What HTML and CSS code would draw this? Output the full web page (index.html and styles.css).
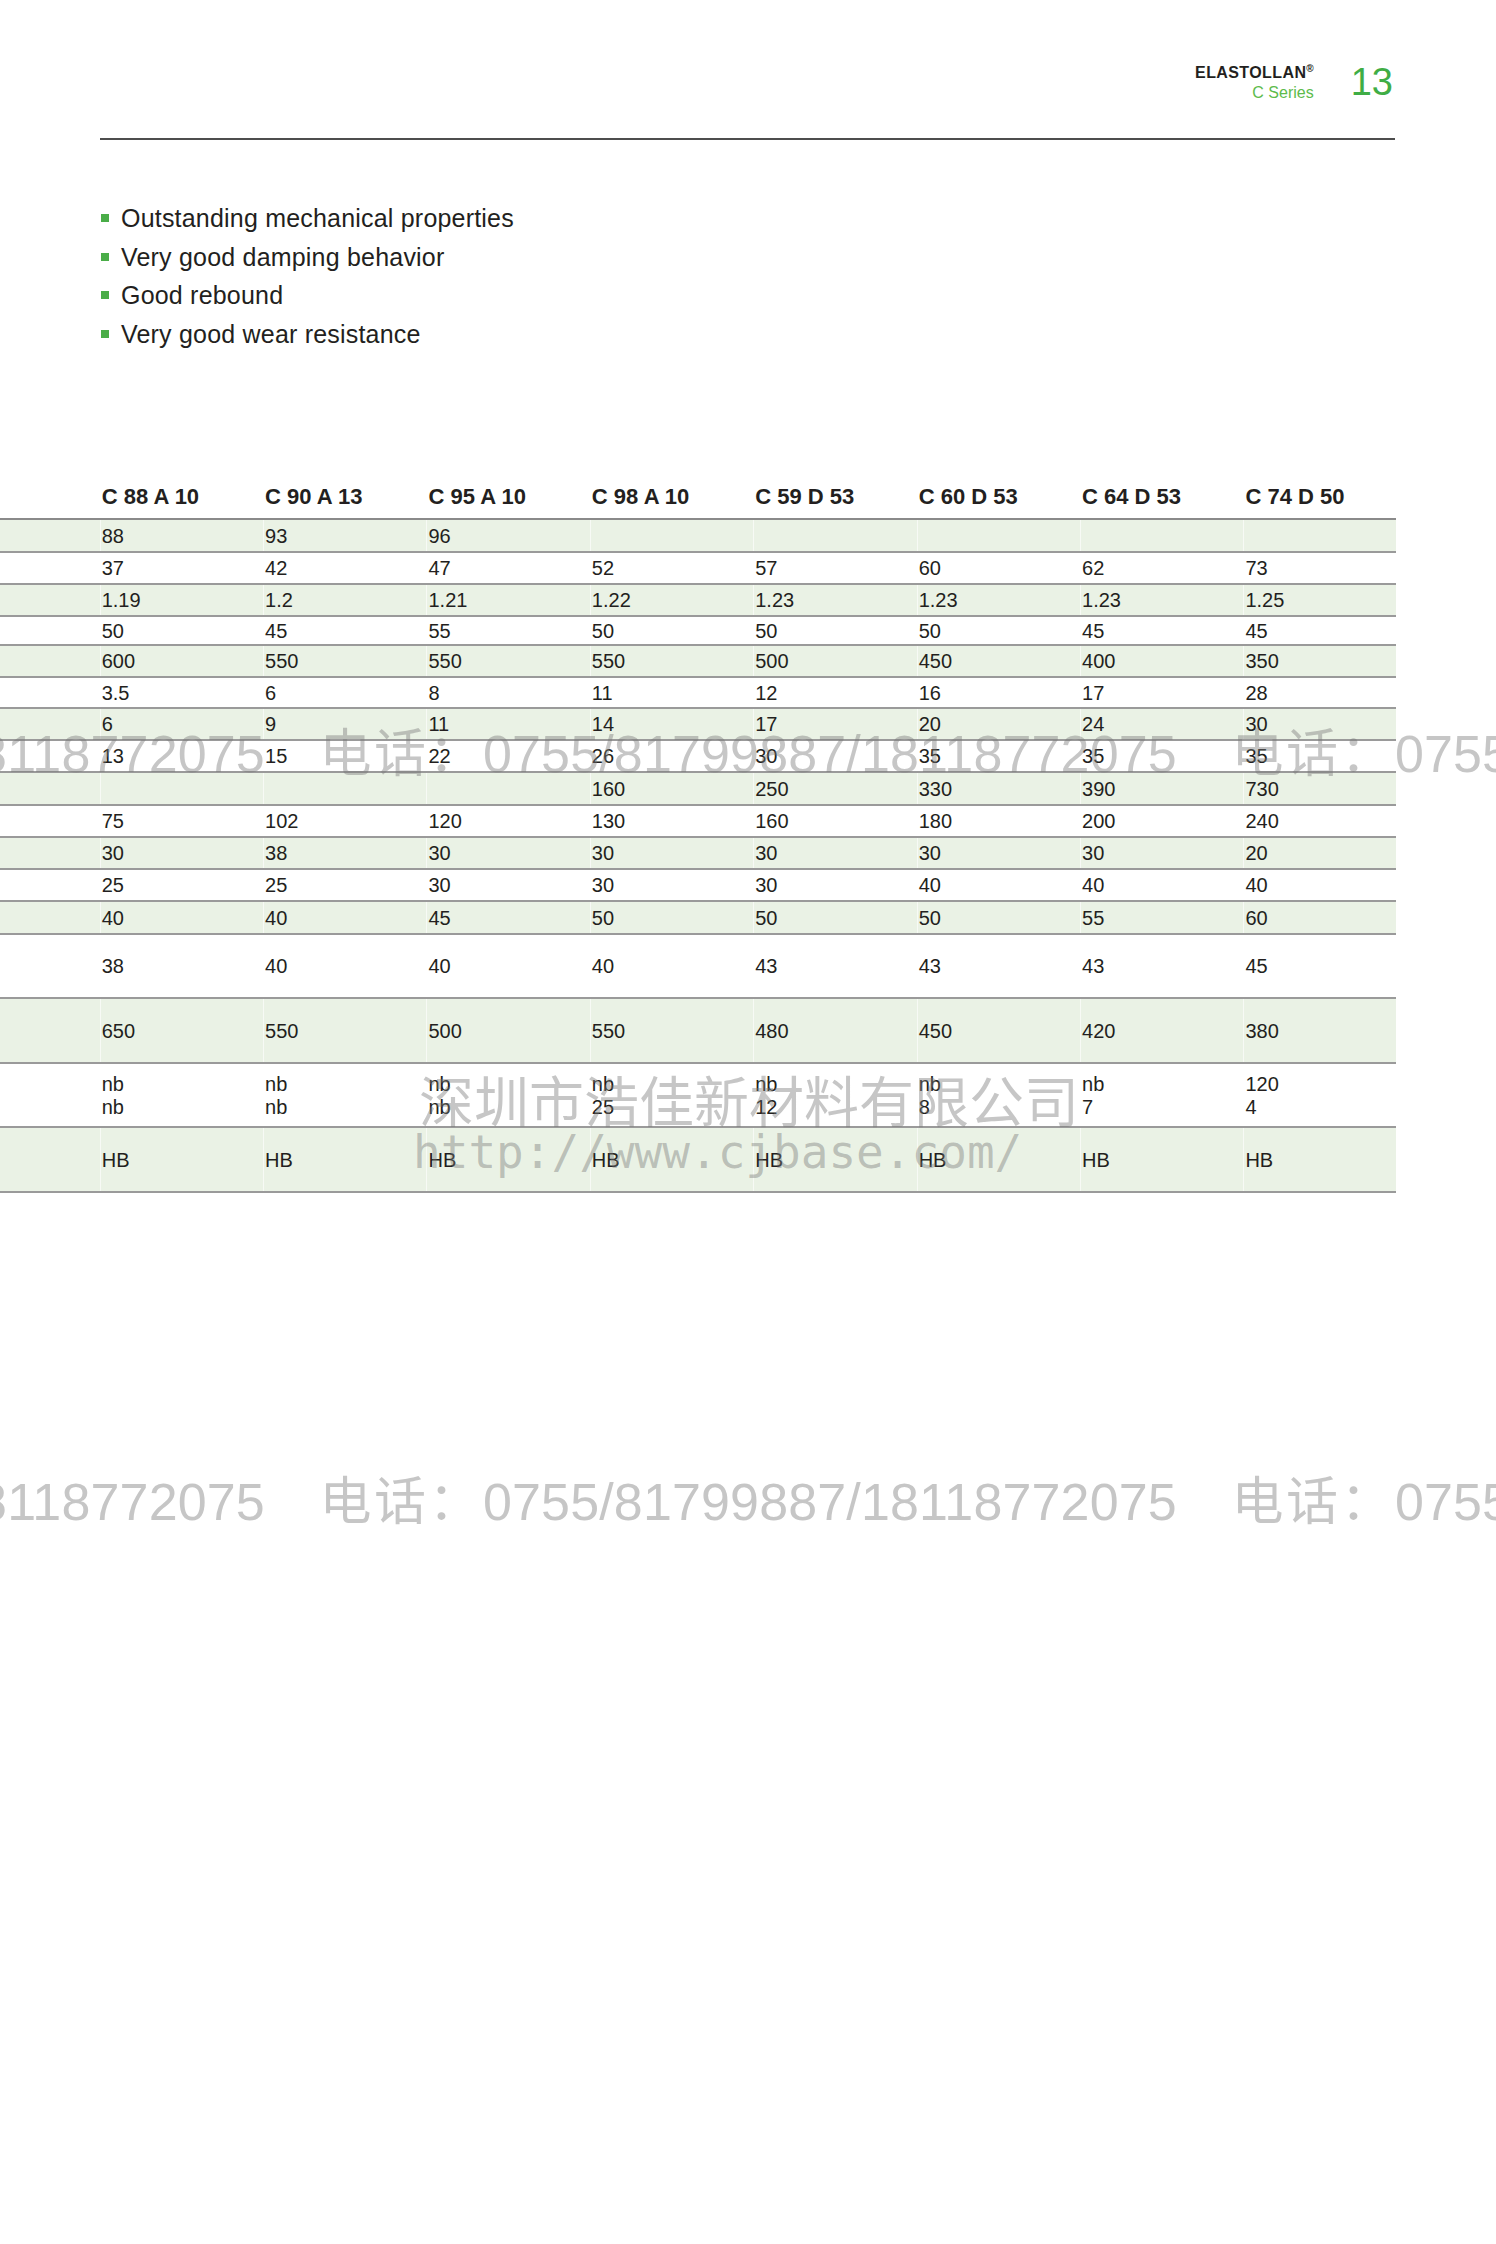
FILE: index.html
```html
<!DOCTYPE html>
<html lang="en">
<head>
<meta charset="utf-8">
<title>Elastollan C Series</title>
<link rel="stylesheet" href="styles.css">
</head>
<body>
<div class="page">
  <header class="top">
    <div class="brand">
      <div class="brand-name">ELASTOLLAN<span class="reg">®</span></div>
      <div class="brand-series">C Series</div>
    </div>
    <div class="pagenum">13</div>
  </header>
  <div class="rule"></div>

  <ul class="features">
    <li>Outstanding mechanical properties</li>
    <li>Very good damping behavior</li>
    <li>Good rebound</li>
    <li>Very good wear resistance</li>
  </ul>

  <div class="grid">
    <div class="row head"><div class="cell"></div><div class="cell">C 88 A 10</div><div class="cell">C 90 A 13</div><div class="cell">C 95 A 10</div><div class="cell">C 98 A 10</div><div class="cell">C 59 D 53</div><div class="cell">C 60 D 53</div><div class="cell">C 64 D 53</div><div class="cell">C 74 D 50</div></div>
    <div class="row alt h33"><div class="cell"></div><div class="cell">88</div><div class="cell">93</div><div class="cell">96</div><div class="cell"></div><div class="cell"></div><div class="cell"></div><div class="cell"></div><div class="cell"></div></div>
    <div class="row h32"><div class="cell"></div><div class="cell">37</div><div class="cell">42</div><div class="cell">47</div><div class="cell">52</div><div class="cell">57</div><div class="cell">60</div><div class="cell">62</div><div class="cell">73</div></div>
    <div class="row alt h32"><div class="cell"></div><div class="cell">1.19</div><div class="cell">1.2</div><div class="cell">1.21</div><div class="cell">1.22</div><div class="cell">1.23</div><div class="cell">1.23</div><div class="cell">1.23</div><div class="cell">1.25</div></div>
    <div class="row h29"><div class="cell"></div><div class="cell">50</div><div class="cell">45</div><div class="cell">55</div><div class="cell">50</div><div class="cell">50</div><div class="cell">50</div><div class="cell">45</div><div class="cell">45</div></div>
    <div class="row alt h32"><div class="cell"></div><div class="cell">600</div><div class="cell">550</div><div class="cell">550</div><div class="cell">550</div><div class="cell">500</div><div class="cell">450</div><div class="cell">400</div><div class="cell">350</div></div>
    <div class="row h31"><div class="cell"></div><div class="cell">3.5</div><div class="cell">6</div><div class="cell">8</div><div class="cell">11</div><div class="cell">12</div><div class="cell">16</div><div class="cell">17</div><div class="cell">28</div></div>
    <div class="row alt h32"><div class="cell"></div><div class="cell">6</div><div class="cell">9</div><div class="cell">11</div><div class="cell">14</div><div class="cell">17</div><div class="cell">20</div><div class="cell">24</div><div class="cell">30</div></div>
    <div class="row h32"><div class="cell"></div><div class="cell">13</div><div class="cell">15</div><div class="cell">22</div><div class="cell">26</div><div class="cell">30</div><div class="cell">35</div><div class="cell">35</div><div class="cell">35</div></div>
    <div class="row alt h33"><div class="cell"></div><div class="cell"></div><div class="cell"></div><div class="cell"></div><div class="cell">160</div><div class="cell">250</div><div class="cell">330</div><div class="cell">390</div><div class="cell">730</div></div>
    <div class="row h32"><div class="cell"></div><div class="cell">75</div><div class="cell">102</div><div class="cell">120</div><div class="cell">130</div><div class="cell">160</div><div class="cell">180</div><div class="cell">200</div><div class="cell">240</div></div>
    <div class="row alt h32"><div class="cell"></div><div class="cell">30</div><div class="cell">38</div><div class="cell">30</div><div class="cell">30</div><div class="cell">30</div><div class="cell">30</div><div class="cell">30</div><div class="cell">20</div></div>
    <div class="row h32"><div class="cell"></div><div class="cell">25</div><div class="cell">25</div><div class="cell">30</div><div class="cell">30</div><div class="cell">30</div><div class="cell">40</div><div class="cell">40</div><div class="cell">40</div></div>
    <div class="row alt h33"><div class="cell"></div><div class="cell">40</div><div class="cell">40</div><div class="cell">45</div><div class="cell">50</div><div class="cell">50</div><div class="cell">50</div><div class="cell">55</div><div class="cell">60</div></div>
    <div class="row h64"><div class="cell"></div><div class="cell">38</div><div class="cell">40</div><div class="cell">40</div><div class="cell">40</div><div class="cell">43</div><div class="cell">43</div><div class="cell">43</div><div class="cell">45</div></div>
    <div class="row alt h65"><div class="cell"></div><div class="cell">650</div><div class="cell">550</div><div class="cell">500</div><div class="cell">550</div><div class="cell">480</div><div class="cell">450</div><div class="cell">420</div><div class="cell">380</div></div>
    <div class="row h64"><div class="cell"></div><div class="cell">nb<br>nb</div><div class="cell">nb<br>nb</div><div class="cell">nb<br>nb</div><div class="cell">nb<br>25</div><div class="cell">nb<br>12</div><div class="cell">nb<br>8</div><div class="cell">nb<br>7</div><div class="cell">120<br>4</div></div>
    <div class="row alt h65"><div class="cell"></div><div class="cell">HB</div><div class="cell">HB</div><div class="cell">HB</div><div class="cell">HB</div><div class="cell">HB</div><div class="cell">HB</div><div class="cell">HB</div><div class="cell">HB</div></div>
  </div>

  <div class="wm wm-phone wm-phone-a">18118772075<span class="wm-cjk">　电话：</span>0755/81799887/18118772075<span class="wm-cjk">　电话：</span>0755/81799887</div>
  <div class="wm wm-company">深圳市浩佳新材料有限公司</div>
  <div class="wm wm-url">http://www.cjbase.com/</div>
  <div class="wm wm-phone wm-phone-b">18118772075<span class="wm-cjk">　电话：</span>0755/81799887/18118772075<span class="wm-cjk">　电话：</span>0755/81799887</div>
</div>
</body>
</html>
```

FILE: styles.css
```css
html, body {
  margin: 0;
  padding: 0;
  background: #ffffff;
}

.page {
  position: relative;
  width: 1496px;
  min-height: 2244px;
  overflow: hidden;
  font-family: "Liberation Sans", Arial, sans-serif;
  color: #231f20;
}

/* ---------- header ---------- */
.top {
  display: flex;
  justify-content: flex-end;
  align-items: flex-start;
  padding: 59px 103px 0 0;
  height: 44px;
}

.brand {
  text-align: right;
}

.brand-name {
  font-size: 16px;
  line-height: 20px;
  font-weight: bold;
  letter-spacing: 0.4px;
  color: #231f20;
}

.reg {
  font-size: 10px;
  vertical-align: 6px;
  letter-spacing: 0;
}

.brand-series {
  font-size: 16px;
  line-height: 20px;
  color: #5dbb4b;
}

.pagenum {
  margin: 4px 0 0 37px;
  font-size: 38px;
  line-height: 38px;
  color: #3fad45;
}

.rule {
  margin: 35px 101px 0 100px;
  height: 2px;
  background: #4d4d4d;
}

/* ---------- features ---------- */
.features {
  list-style: none;
  margin: 59px 0 0 0;
  padding: 0 0 0 101px;
}

.features li {
  font-size: 25px;
  line-height: 38.5px;
  letter-spacing: 0.2px;
  color: #231f20;
}

.features li::before {
  content: "";
  display: inline-block;
  width: 8px;
  height: 8px;
  background: #4aad48;
  margin-right: 12px;
  vertical-align: 5px;
}

/* ---------- table ---------- */
.grid {
  margin-top: 127px;
  width: 1396px;
}

.row {
  display: grid;
  grid-template-columns: 99.7px repeat(7, 163.4px) 1fr;
  box-sizing: border-box;
  border-bottom: 2px solid #9a9a9a;
  font-size: 20px;
  line-height: 23.5px;
}

.row.alt {
  background: #eaf2e5;
}

.row.head {
  height: 40px;
  border-bottom-color: #8a8a8a;
}

.row.head .cell {
  align-items: flex-end;
  padding-bottom: 10px;
  font-weight: bold;
  font-size: 22px;
  line-height: 22px;
}

.cell {
  display: flex;
  align-items: center;
  box-sizing: border-box;
  padding: 2px 0 0 1px;
  border-left: 1px solid rgba(255, 255, 255, 0.6);
  white-space: nowrap;
}

.cell:first-child {
  border-left: none;
}

.h29 { height: 29px; }
.h31 { height: 31px; }
.h32 { height: 32px; }
.h33 { height: 33px; }
.h64 { height: 64px; }
.h65 { height: 65px; }

/* ---------- watermarks (overlay) ---------- */
.wm {
  position: absolute;
  white-space: nowrap;
  color: rgba(120, 120, 120, 0.42);
  pointer-events: none;
}

.wm-phone {
  left: -51px;
  font-family: "Liberation Sans", "Noto Sans CJK SC", sans-serif;
  font-size: 52px;
  line-height: 52px;
  letter-spacing: 0.15px;
}

.wm-cjk {
  letter-spacing: 2.5px;
}

.wm-phone-a { top: 728px; }
.wm-phone-b { top: 1476px; }

.wm-company {
  left: 419px;
  top: 1071px;
  font-family: "Noto Sans CJK SC", sans-serif;
  font-size: 55px;
  line-height: 55px;
}

.wm-url {
  left: 413px;
  top: 1129px;
  font-family: "DejaVu Sans Mono", monospace;
  font-size: 46px;
  line-height: 46px;
}
```
